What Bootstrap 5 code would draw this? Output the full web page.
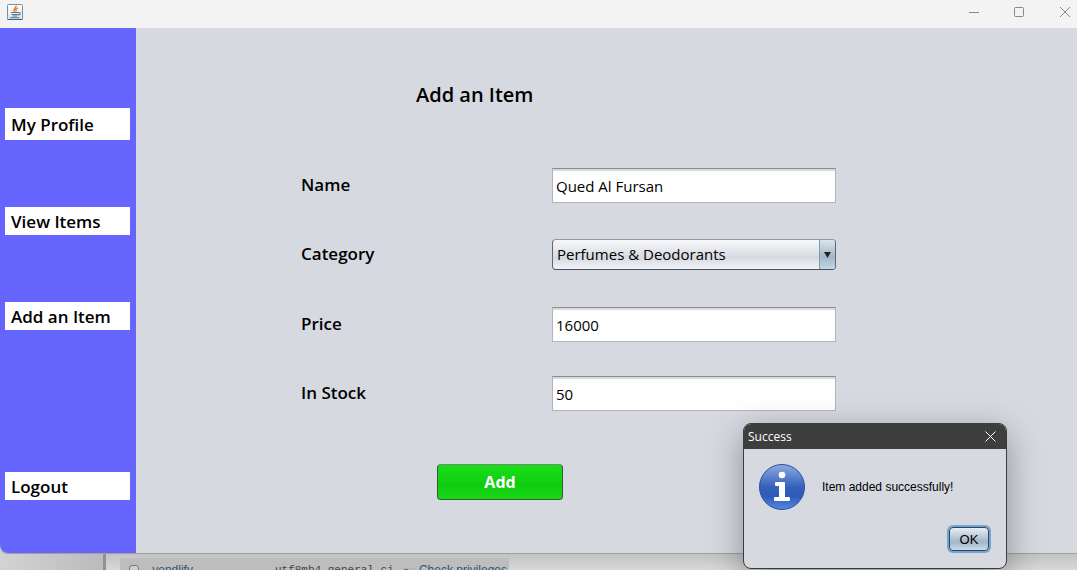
<!DOCTYPE html>
<html lang="en">
<head>
<meta charset="utf-8">
<meta name="viewport" content="width=device-width, initial-scale=1">
<title>Add an Item</title>
<link href="https://cdn.jsdelivr.net/npm/bootstrap@5.3.0/dist/css/bootstrap.min.css" rel="stylesheet">
<style>
  body { font-family: "Trebuchet MS", "Open Sans", sans-serif; color: #000; background: #d0d0d0; }
  .app-window { border-bottom: 1px solid #a0a0a3; border-bottom-left-radius: 8px; background: #d6d9e0; }
  .title-bar { height: 28px; background: #f3f3f3; padding: 0 6px 4px; }
  .win-btn { width: 12px; height: 12px; }
  .win-btns { gap: 33px; }
  .side-menu { width: 136px; background: #6666ff; padding: 80px 6px 53px 5px; border-bottom-left-radius: 8px; }
  .menu-link { height: 28px; line-height: 30px; padding-left: 6px; background: #fff; color: #000; font-size: 17px; font-weight: 600; text-decoration: none; white-space: nowrap; }
  .menu-link.tall { height: 32px; line-height: 34px; }
  .menu-items { gap: 67px; }
  .form-area { padding: 52px 0 0 165px; }
  .page-title { font-size: 20px; line-height: 30px; font-weight: 600; padding-left: 115px; margin-bottom: 58px; }
  .fields { row-gap: 34px; grid-template-columns: 251px 284px; }
  .fields label { font-size: 17px; line-height: 34px; font-weight: 600; }
  .swing-text, .swing-select { font-size: 15px; border-radius: 0; color: #000; padding: 0 3px; }
  .swing-text { height: 35px; border: 1px solid #b4b5b8; border-top-color: #8b8c90; box-shadow: inset 0 2px 1px #d9d9dc; }
  .swing-select { height: 31px; margin: 2px 0 3px; border: 1px solid #63666c; border-top-color: #9496a0; border-bottom-color: #46525e; border-radius: 4px; padding: 0 20px 0 4px;
    background: linear-gradient(#f7f8fa, #dcdfe5 50%, #d6d9df 60%, #f0f3f8); }
  .arrow-cell { width: 16px; top: 3px; bottom: 4px; right: 1px; border-left: 1px solid #8397a8; border-radius: 0 3px 3px 0; pointer-events: none; background: linear-gradient(#dce4ec, #a9bdce 50%, #a2b7c9 60%, #c3d7e8); }
  .add-btn { width: 126px; height: 36px; margin: 53px 0 0 136px; padding: 0; font-size: 16px; font-weight: 700; color: #fff; border: 1px solid #305c30; border-top-color: #6f8c72; border-radius: 4px; background: linear-gradient(#1ade1a, #10cc10 60%, #19d919); }
  .backdrop-row { height: 16px; background: linear-gradient(#c3c3c3, #d8d8d8); font-family: "Liberation Sans", sans-serif; font-size: 12px; line-height: 14px; }
  .backdrop-side { width: 106px; border-right: 3px solid #929292; background: linear-gradient(90deg, #d2d4d4, #b9bbbc); }
  .db-row { width: 389px; height: 24px; margin: 4px 0 0 14px; padding: 5px 2px 0 9px; background: #bdbdbd; color: #34546b; }
  .db-row input { appearance: none; width: 11px; height: 11px; margin: 2px 13px 0 0; border: 1px solid #777; border-radius: 3px; background: #d0d0d0; }
  .collation { width: 128px; margin-left: 82px; font-family: "Liberation Mono", monospace; font-size: 11px; color: #444; }
  .dialog-box { right: 70px; bottom: 1px; width: 264px; height: 146px; border: 1px solid #3c3c3c; border-radius: 8px; background: #d6d9e0; overflow: hidden; box-shadow: 0 10px 34px rgba(0,0,0,.35); }
  .dialog-head { height: 25px; background: #3e3e3e; color: #fff; font-family: "Open Sans", sans-serif; font-size: 12px; padding: 0 10px 0 4px; }
  .dialog-text { font-family: "Liberation Sans", sans-serif; font-size: 12px; padding: 15px 15px 0; gap: 17px; }
  .ok-btn { width: 40px; height: 24px; margin: 17px 17px 0 auto; padding: 0; font: 13px "Liberation Sans", sans-serif; color: #000; border: 1px solid #2f4558; border-radius: 4px; background: linear-gradient(#e8eef4, #a9bdce 55%, #a2b7c9 65%, #c8dcec); box-shadow: 0 0 0 2px #73a4d1; }
</style>
</head>
<body class="vh-100 overflow-hidden position-relative d-flex flex-column">
<div class="app-window flex-grow-1 d-flex flex-column">
  <header class="title-bar d-flex align-items-center justify-content-between">
    <svg width="18" height="18" viewBox="0 0 18 18" aria-label="Java">
      <defs><linearGradient id="tile" x2="0" y2="1"><stop stop-color="#fff"/><stop offset="1" stop-color="#dbe2e8"/></linearGradient></defs>
      <rect x="1.500" y="1.500" width="15" height="15" rx="1" fill="url(#tile)" stroke="#7b8e9e"/>
      <path d="M1.500 16.500h15" stroke="#46637c"/>
      <path d="M9.800 2.500c1.500 2.200-3.600 3-1.300 6.200M12 5c-3 1.200-2.500 2-1.500 3.500" fill="none" stroke="#e8862e" stroke-width="1.500"/>
      <path d="M5 9.500h7.500M5.500 11.500h6.500M6.500 13h4.500M12.500 9.500c3.200 0 1.500 2.500-.7 2.700M4 14.800h9.500" fill="none" stroke="#55758f" stroke-width="1.100"/>
    </svg>
    <div class="win-btns d-flex">
      <button class="win-btn btn p-0 border-0 d-flex" aria-label="Minimize"><svg width="12" height="12"><path d="M0 6.500h10" stroke="#888"/></svg></button>
      <button class="win-btn btn p-0 border-0 d-flex" aria-label="Maximize"><svg width="12" height="12"><rect x=".5" y="1.500" width="9" height="9" rx="1" fill="none" stroke="#888"/></svg></button>
      <button class="win-btn btn p-0 border-0 d-flex" aria-label="Close"><svg width="12" height="12"><path d="M1 1l10 10M11 1L1 11" stroke="#888"/></svg></button>
    </div>
  </header>
  <div class="d-flex flex-grow-1">
    <nav class="side-menu d-flex flex-column justify-content-between flex-shrink-0">
      <div class="menu-items d-flex flex-column">
        <a href="#" class="menu-link tall">My Profile</a>
        <a href="#" class="menu-link">View Items</a>
        <a href="#" class="menu-link">Add an Item</a>
      </div>
      <a href="#" class="menu-link">Logout</a>
    </nav>
    <main class="flex-grow-1">
      <form class="form-area">
        <h1 class="page-title">Add an Item</h1>
        <div class="fields d-grid">
          <label for="name">Name</label>
          <input id="name" class="form-control swing-text" value="Qued Al Fursan">
          <label for="category">Category</label>
          <div class="position-relative">
            <select id="category" class="form-select swing-select"><option>Perfumes &amp; Deodorants</option></select>
            <span class="arrow-cell position-absolute d-flex align-items-center justify-content-center"><svg width="8" height="6"><path d="M0 0h7L3.500 6z" fill="#222"/></svg></span>
          </div>
          <label for="price">Price</label>
          <input id="price" class="form-control swing-text" value="16000">
          <label for="stock">In Stock</label>
          <input id="stock" class="form-control swing-text" value="50">
        </div>
        <button type="button" class="btn add-btn">Add</button>
      </form>
    </main>
  </div>
</div>
<div class="backdrop-row d-flex overflow-hidden">
  <div class="backdrop-side"></div>
  <div class="db-row d-flex">
    <input type="checkbox" id="db"><label for="db">vendlify</label>
    <span class="collation flex-shrink-0">utf8mb4_general_ci</span>
    <svg width="12" height="12" class="mt-1 me-1 flex-shrink-0"><path d="M0 1h12v8H0z" fill="#a9b6c0"/><path d="M1 2h4v4H1zM7 3h4v1H7z" fill="#58768c"/></svg>
    <span class="text-nowrap">Check privileges</span>
  </div>
</div>
<section class="dialog-box position-absolute" role="dialog" aria-label="Success">
  <div class="dialog-head d-flex align-items-center justify-content-between">
    <span>Success</span>
    <button class="btn p-0 border-0 d-flex" aria-label="Close dialog"><svg width="11" height="11"><path d="M.5.5l10 10M10.500.5l-10 10" stroke="#fff"/></svg></button>
  </div>
  <div class="dialog-text d-flex align-items-center">
    <svg width="46" height="46" viewBox="0 0 46 46"><defs><linearGradient id="blue" x2="0" y2="1"><stop stop-color="#8fabe0"/><stop offset=".5" stop-color="#3461ba"/><stop offset=".7" stop-color="#2b5ab8"/><stop offset="1" stop-color="#5887e4"/></linearGradient></defs>
      <circle cx="23" cy="23" r="22.500" fill="url(#blue)" stroke="#2a4f9e"/><circle cx="23" cy="11" r="3.300" fill="#fff"/><path d="M17 18h8q1 0 1 1v14h4q1 0 1 1v2q0 1-1 1H16q-1 0-1-1v-2q0-1 1-1h4V22h-3q-1 0-1-1v-2q0-1 1-1z" fill="#fff"/></svg>
    <span>Item added successfully!</span>
  </div>
  <button class="btn ok-btn d-block">OK</button>
</section>
<script src="https://cdn.jsdelivr.net/npm/bootstrap@5.3.0/dist/js/bootstrap.bundle.min.js"></script>
</body>
</html>
